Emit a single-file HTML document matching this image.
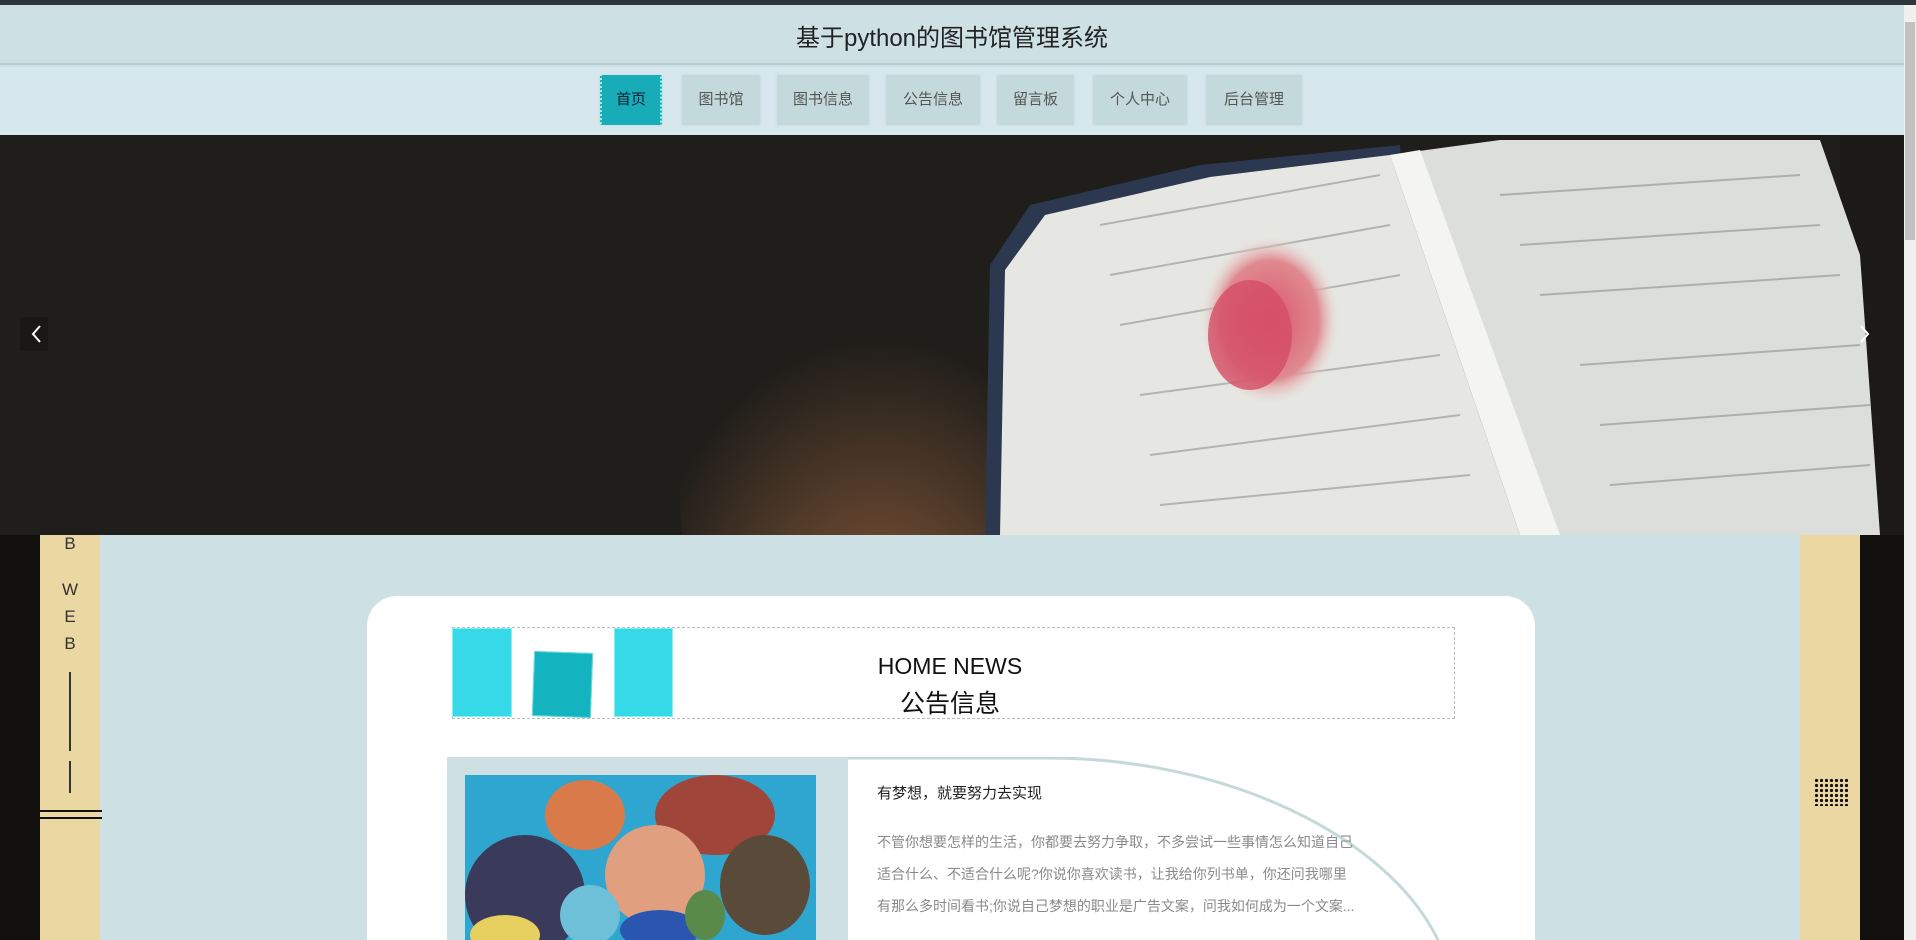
<!DOCTYPE html>
<html style="width:1916px;height:940px;overflow:hidden"><head><meta charset="utf-8"><style>
*{margin:0;padding:0;box-sizing:border-box}
body{width:1916px;height:940px;overflow:hidden;background:#cde0e3;font-family:"Liberation Sans","Noto Sans CJK SC",sans-serif;position:relative}
.abs{position:absolute}
.nav a{position:absolute;top:75px;height:50px;line-height:50px;text-align:center;font-size:15px;color:#555;background:#c4d9dc;border-radius:2px;box-shadow:0 0 3px rgba(0,0,0,.08)}
.nav a.act{background:#17acb8;color:#123;border-left:2px dotted #9fe;border-right:2px dotted #9fe}
.txt{position:absolute;left:877px;font-size:14px;color:#8a8a8a;white-space:nowrap}
</style></head><body>
<div class="abs" style="left:0;top:0;width:1916px;height:5px;background:#2e353b"></div>
<div class="abs" style="left:0;top:5px;width:1904px;height:60px;background:#cde0e4;border-bottom:2px solid #b8cdd2"></div>
<div class="abs" style="left:0;top:18px;width:1904px;text-align:center;font-size:24px;color:#222">基于python的图书馆管理系统</div>
<div class="abs" style="left:0;top:67px;width:1904px;height:68px;background:#d6e7ee"></div>
<div class="nav">
<a class="act" style="left:600px;width:62px">首页</a>
<a style="left:682px;width:78px">图书馆</a>
<a style="left:777px;width:92px">图书信息</a>
<a style="left:886px;width:94px">公告信息</a>
<a style="left:997px;width:77px">留言板</a>
<a style="left:1093px;width:94px">个人中心</a>
<a style="left:1206px;width:96px">后台管理</a>
</div>
<svg class="abs" style="left:0;top:135px" width="1904" height="400" viewBox="0 0 1904 400">
<defs>
<radialGradient id="wood" cx="0.5" cy="0.8" r="0.6"><stop offset="0" stop-color="#8a5a3a"/><stop offset="1" stop-color="#1f1e1a"/></radialGradient>
<radialGradient id="fl" cx="0.5" cy="0.5" r="0.5"><stop offset="0" stop-color="#d9556a"/><stop offset="0.7" stop-color="#e08a90"/><stop offset="1" stop-color="#e8dcd8" stop-opacity="0"/></radialGradient>
</defs>
<rect width="1904" height="400" fill="#1f1e1a"/>
<ellipse cx="880" cy="360" rx="200" ry="260" fill="url(#wood)"/>
<rect x="1840" y="0" width="64" height="400" fill="#1c1a16"/>
<polygon points="985,400 990,130 1030,70 1200,30 1400,10 1420,400" fill="#2b3850"/>
<polygon points="1000,400 1005,135 1045,80 1210,42 1390,20 1520,400" fill="#e6e7e2"/>
<polygon points="1390,20 1500,5 1820,5 1860,120 1880,400 1530,400" fill="#dcdedb"/>
<polygon points="1390,20 1420,15 1560,400 1520,400" fill="#f4f4f0"/>
<g stroke="#777" stroke-width="2" opacity=".45">
<path d="M1100 90 L1380 40 M1110 140 L1390 90 M1120 190 L1400 140 M1140 260 L1440 220 M1150 320 L1460 280 M1160 370 L1470 340"/>
<path d="M1500 60 L1800 40 M1520 110 L1820 90 M1540 160 L1840 140 M1580 230 L1860 210 M1600 290 L1870 270 M1610 350 L1870 330"/>
</g>
<ellipse cx="1270" cy="185" rx="70" ry="85" fill="url(#fl)"/>
<ellipse cx="1250" cy="200" rx="42" ry="55" fill="#d44e66" opacity=".8"/>
<rect x="20" y="182" width="28" height="34" fill="#191814"/>
<path d="M40 191 l-7 8 l7 8" stroke="#fff" stroke-width="2" fill="none"/>
<path d="M1861 191 l7 8 l-7 8" stroke="#fff" stroke-width="2" fill="none"/>
</svg>
<div class="abs" style="left:0;top:535px;width:40px;height:405px;background:#11100d"></div>
<div class="abs" style="left:40px;top:535px;width:60px;height:405px;background:#ead7a1"></div>
<div class="abs" style="left:1800px;top:535px;width:60px;height:405px;background:#ead7a1"></div>
<div class="abs" style="left:1860px;top:535px;width:44px;height:405px;background:#11100d"></div>
<div class="abs" style="left:40px;top:530px;width:60px;text-align:center;font-size:17px;color:#333;line-height:27px">B</div>
<div class="abs" style="left:40px;top:576px;width:60px;text-align:center;font-size:17px;color:#333;line-height:27px">W<br>E<br>B</div>
<div class="abs" style="left:69px;top:672px;width:2px;height:79px;background:#333"></div>
<div class="abs" style="left:69px;top:761px;width:2px;height:32px;background:#333"></div>
<div class="abs" style="left:40px;top:810px;width:62px;height:2px;background:#111"></div>
<div class="abs" style="left:40px;top:817px;width:62px;height:2px;background:#111"></div>
<div class="abs" style="left:1814px;top:778px;width:34px;height:28px;background-image:radial-gradient(#111 1.5px,transparent 1.8px);background-size:5px 5px"></div>
<div class="abs" style="left:1904px;top:5px;width:12px;height:935px;background:#f0f0f0"></div>
<div class="abs" style="left:1905px;top:22px;width:10px;height:218px;background:#c1c1c1"></div>
<div class="abs" style="left:367px;top:596px;width:1168px;height:344px;background:#fff;border-radius:30px 30px 0 0"></div>
<div class="abs" style="left:452px;top:627px;width:1003px;height:92px;border:1px dashed #bbb"></div>
<div class="abs" style="left:452px;top:628px;width:60px;height:89px;background:#36d9e8;border:1px solid #8ee"></div>
<div class="abs" style="left:533px;top:652px;width:59px;height:65px;background:#14b3c0;transform:rotate(2deg);border:1px solid #6dd"></div>
<div class="abs" style="left:614px;top:628px;width:59px;height:89px;background:#36d9e8;border:1px solid #8ee"></div>
<div class="abs" style="left:850px;top:653px;width:200px;text-align:center;font-size:23px;color:#111">HOME NEWS</div>
<div class="abs" style="left:850px;top:684px;width:200px;text-align:center;font-size:25px;color:#111">公告信息</div>
<div class="abs" style="left:447px;top:757px;width:401px;height:183px;background:#cfe0e4"></div>
<svg class="abs" style="left:465px;top:775px" width="351" height="165">
<rect width="351" height="165" fill="#2fa6cf"/>
<ellipse cx="60" cy="120" rx="60" ry="60" fill="#3a3a5a"/>
<ellipse cx="120" cy="40" rx="40" ry="35" fill="#d97a4a"/>
<ellipse cx="250" cy="40" rx="60" ry="40" fill="#a0453a"/>
<ellipse cx="190" cy="100" rx="50" ry="50" fill="#e0a080"/>
<ellipse cx="195" cy="155" rx="40" ry="20" fill="#2a56b0"/>
<ellipse cx="125" cy="140" rx="30" ry="30" fill="#6ec0d8"/>
<ellipse cx="300" cy="110" rx="45" ry="50" fill="#5a4a3a"/>
<ellipse cx="40" cy="160" rx="35" ry="20" fill="#e8d060"/>
<ellipse cx="240" cy="140" rx="20" ry="25" fill="#5a8a4a"/>
</svg>
<svg class="abs" style="left:848px;top:757px" width="600" height="183">
<path d="M0 1 L200 1 C380 1 540 80 590 183" fill="none" stroke="#c5dad8" stroke-width="3"/>
</svg>
<div class="abs" style="left:877px;top:782px;font-size:15px;color:#222">有梦想，就要努力去实现</div>
<div class="txt" style="top:832px">不管你想要怎样的生活，你都要去努力争取，不多尝试一些事情怎么知道自己</div>
<div class="txt" style="top:864px">适合什么、不适合什么呢?你说你喜欢读书，让我给你列书单，你还问我哪里</div>
<div class="txt" style="top:896px">有那么多时间看书;你说自己梦想的职业是广告文案，问我如何成为一个文案...</div>
</body></html>
